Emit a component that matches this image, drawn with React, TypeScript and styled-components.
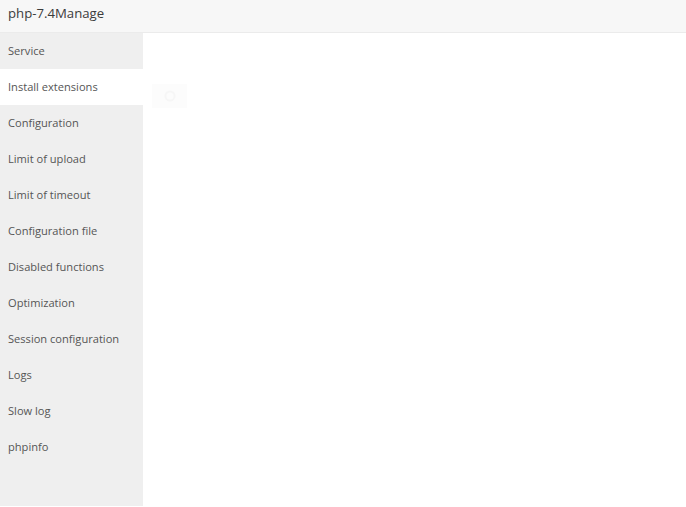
import styled, { createGlobalStyle } from "styled-components";

const GlobalStyle = createGlobalStyle`
  html, body {
    margin: 0;
    padding: 0;
    background: #fff;
    font-family: "Open Sans", "Noto Sans", "Liberation Sans", sans-serif;
  }
`;

const Window = styled.div`
  width: 686px;
  height: 507px;
  display: flex;
  flex-direction: column;
  background: #fff;
  overflow: hidden;
`;

const Title = styled.div`
  height: 33px;
  flex-shrink: 0;
  box-sizing: border-box;
  padding: 3px 0 0 8px;
  line-height: 20px;
  background: #f7f7f7;
  border-bottom: 1px solid #ebebeb;
  color: #3c3c3c;
  font-size: 13.2px;
`;

const Body = styled.div`
  flex: 1;
  display: flex;
  padding-bottom: 1px;
`;

const SideMenu = styled.div`
  width: 143px;
  flex-shrink: 0;
  background: #efefef;
  display: flex;
  flex-direction: column;
`;

const MenuItem = styled.div<{ $active?: boolean }>`
  height: 36px;
  box-sizing: border-box;
  padding: 0 0 2px 8px;
  display: flex;
  align-items: center;
  font-size: 11.1px;
  color: #555;
  background: ${(p) => (p.$active ? "#fff" : "transparent")};
  cursor: pointer;
`;

const Content = styled.div`
  flex: 1;
  padding: 51px 0 0 9px;
`;

const Loading = styled.div`
  width: 35px;
  height: 24px;
  background: #fcfcfc;
  display: flex;
  align-items: center;
  justify-content: center;
`;

const items = [
  "Service",
  "Install extensions",
  "Configuration",
  "Limit of upload",
  "Limit of timeout",
  "Configuration file",
  "Disabled functions",
  "Optimization",
  "Session configuration",
  "Logs",
  "Slow log",
  "phpinfo",
];

export default function App() {
  return (
    <>
      <GlobalStyle />
      <Window>
        <Title>php-7.4Manage</Title>
        <Body>
          <SideMenu>
            {items.map((name, i) => (
              <MenuItem key={name} $active={i === 1}>
                {name}
              </MenuItem>
            ))}
          </SideMenu>
          <Content>
            <Loading>
              <svg width="12" height="12" viewBox="0 0 12 12">
                <circle cx="6" cy="6" r="4.5" fill="none" stroke="#f6f6f6" strokeWidth="2" />
              </svg>
            </Loading>
          </Content>
        </Body>
      </Window>
    </>
  );
}
